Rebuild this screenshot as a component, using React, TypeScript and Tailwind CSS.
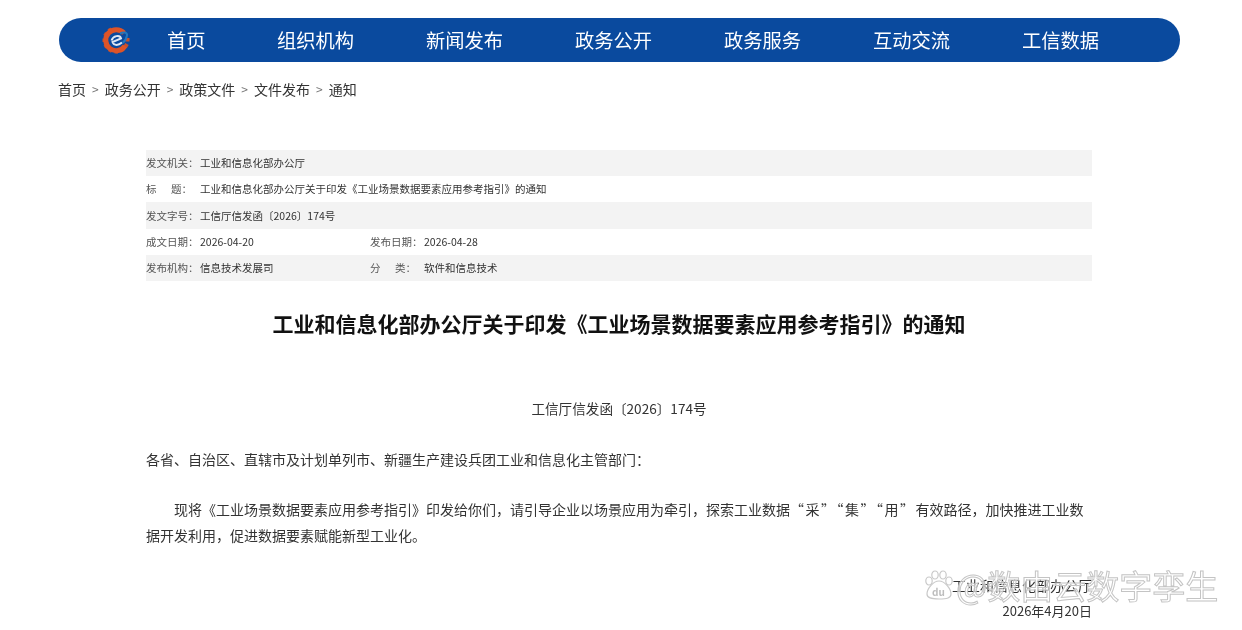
const navItems = ["组织机构", "新闻发布", "政务公开", "政务服务", "互动交流", "工信数据"];
const crumbs = ["政务公开", "政策文件", "文件发布", "通知"];

function Logo() {
  const teeth = Array.from({ length: 12 }, (_, i) => i * 30);
  return (
    <svg width="30" height="30" viewBox="0 0 30 30" className="shrink-0">
      {teeth.slice(2, 11).map((deg) => (
        <rect key={deg} x="13" y="1.5" width="3.5" height="4" fill="#c8502c" transform={`rotate(${deg + 30} 15 15)`} />
      ))}
      <path d="M23 8A10.5 10.5 0 1 0 24 21" fill="none" stroke="#dd5428" strokeWidth="5" />
      <path d="M10.5 15.5C12 10.5 19 9.5 20 13.5L11.5 17C13 21 17.5 20.5 21 17.5" fill="none" stroke="#dfe8f4" strokeWidth="2" />
      <path d="M19 8.5C23 6.5 26.5 7.5 26 10.5C25.5 13.5 24 16 21.5 18" fill="none" stroke="#2477bd" strokeWidth="2" />
    </svg>
  );
}

function InfoRow({ shaded, children }: { shaded?: boolean; children: React.ReactNode }) {
  return (
    <div className={`flex h-[26.2px] items-center text-[10.5px] text-[#333] ${shaded ? "bg-[#f3f3f3]" : ""}`}>
      {children}
    </div>
  );
}

function Field({ label, value, wide }: { label: React.ReactNode; value: string; wide?: boolean }) {
  return (
    <div className={`flex ${wide ? "w-[224px]" : ""}`}>
      <span className="w-[54px] shrink-0 text-[#555]">{label}</span>
      <span>{value}</span>
    </div>
  );
}

export default function App() {
  return (
    <div
      className="relative h-[630px] w-[1242px] overflow-hidden bg-white pt-[18px] [filter:blur(0.3px)]"
      style={{ fontFamily: '"Noto Sans CJK SC", "Liberation Sans", sans-serif' }}
    >
      <nav className="ml-[59px] flex h-[44px] w-[1121px] items-center rounded-[22px] bg-[#0a4a9e] pl-[42px] text-[19.3px] text-white">
        <Logo />
        <span className="ml-[36px] w-[110px]">首页</span>
        <div className="flex">
          {navItems.map((item) => (
            <span key={item} className="w-[149px]">
              {item}
            </span>
          ))}
        </div>
      </nav>

      <div className="ml-[58px] mt-[17px] flex h-[20px] items-center text-[14px] text-[#333]">
        <span>首页</span>
        {crumbs.map((c) => (
          <span key={c} className="flex items-center">
            <span className="mx-[6px] text-[12px] text-[#777]">&gt;</span>
            {c}
          </span>
        ))}
      </div>

      <main className="ml-[146px] mt-[51px] w-[946px]">
        <div>
          <InfoRow shaded>
            <Field label="发文机关：" value="工业和信息化部办公厅" />
          </InfoRow>
          <InfoRow>
            <Field
              label={
                <span className="flex w-[46px] justify-between">
                  <span>标</span>
                  <span>题：</span>
                </span>
              }
              value="工业和信息化部办公厅关于印发《工业场景数据要素应用参考指引》的通知"
            />
          </InfoRow>
          <InfoRow shaded>
            <Field label="发文字号：" value="工信厅信发函〔2026〕174号" />
          </InfoRow>
          <InfoRow>
            <Field wide label="成文日期：" value="2026-04-20" />
            <Field label="发布日期：" value="2026-04-28" />
          </InfoRow>
          <InfoRow shaded>
            <Field wide label="发布机构：" value="信息技术发展司" />
            <Field
              label={
                <span className="flex w-[46px] justify-between">
                  <span>分</span>
                  <span>类：</span>
                </span>
              }
              value="软件和信息技术"
            />
          </InfoRow>
        </div>

        <h1 className="mt-[27px] text-center text-[21px] leading-[30px] font-bold text-[#111]">
          工业和信息化部办公厅关于印发《工业场景数据要素应用参考指引》的通知
        </h1>

        <div className="text-[14px] leading-[26px] text-[#333]">
          <p className="mt-[57px] text-center text-[13.6px]">工信厅信发函〔2026〕174号</p>
          <p className="mt-[25px]">各省、自治区、直辖市及计划单列市、新疆生产建设兵团工业和信息化主管部门：</p>
          <p className="mt-[24px] indent-[28px]">
            现将《工业场景数据要素应用参考指引》印发给你们，请引导企业以场景应用为牵引，探索工业数据
            <span className="tracking-[1.5px]">“采”“集”“用”</span>
            有效路径，加快推进工业数据开发利用，促进数据要素赋能新型工业化。
          </p>
          <div className="mt-[25px] text-right leading-[25px]">
            <p>工业和信息化部办公厅</p>
            <p className="text-[13px]">2026年4月20日</p>
          </div>
        </div>
      </main>

      {/* watermark */}
      <div className="absolute top-[565px] left-[923px] flex h-[40px] items-center">
        <svg width="30" height="32" viewBox="0 0 30 32" className="mr-[3px]">
          <g fill="#fff" stroke="#c9c9c9" strokeWidth="1.2">
            <ellipse cx="6" cy="12" rx="3.2" ry="4" />
            <ellipse cx="12" cy="6" rx="3.2" ry="4" />
            <ellipse cx="20" cy="6" rx="3.2" ry="4" />
            <ellipse cx="26" cy="12" rx="3.2" ry="4" />
            <path d="M16 12C10 12 4 20 4 25C4 29 8 30 16 30C24 30 28 29 28 25C28 20 22 12 16 12Z" />
          </g>
          <text x="9" y="27" fontSize="10" fontWeight="700" fill="#bdbdbd">du</text>
        </svg>
        <span className="text-[33px] leading-none text-white/60 [-webkit-text-stroke:1px_#c4c4c4]">@数由云数字孪生</span>
      </div>
    </div>
  );
}
